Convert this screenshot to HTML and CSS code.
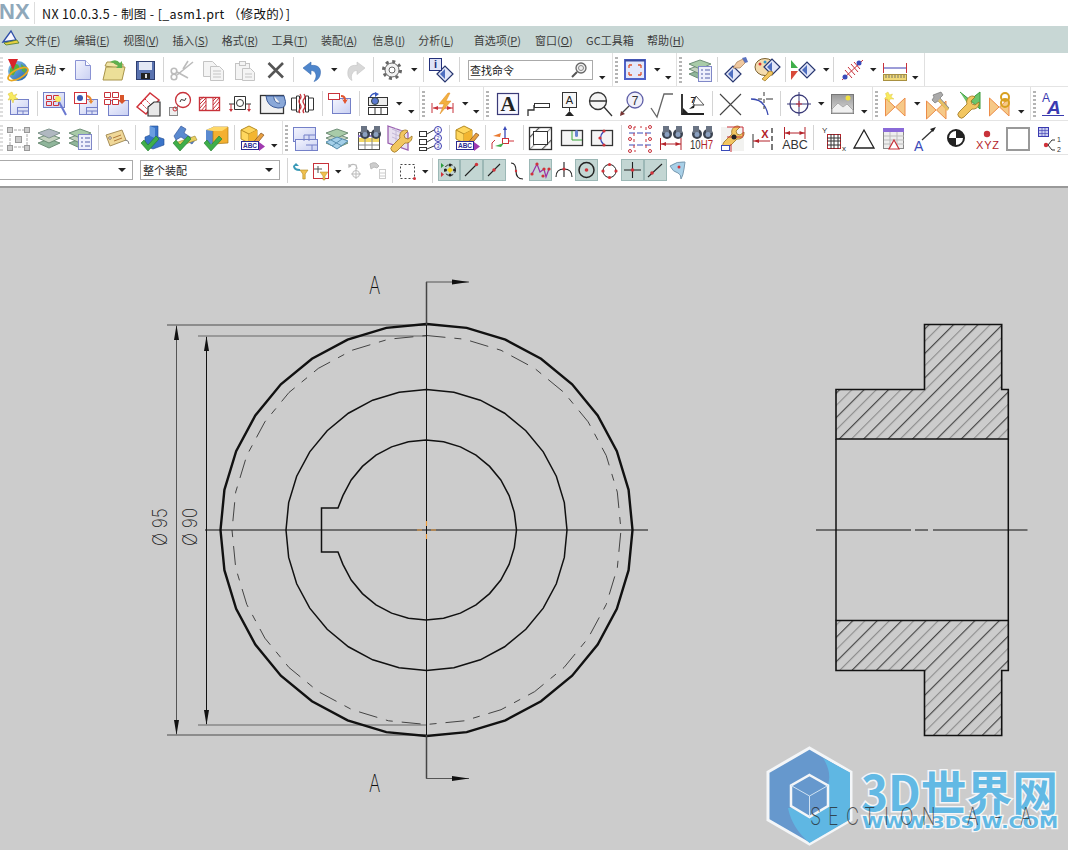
FILE: index.html
```html
<!DOCTYPE html>
<html lang="zh">
<head>
<meta charset="utf-8">
<title>NX 10.0.3.5</title>
<link rel="stylesheet" href="styles.css">
</head>
<body>
<svg class="defs" width="0" height="0">
<defs>
<linearGradient id="gw" x1="0" y1="0" x2="1" y2="1"><stop offset="0" stop-color="#f4f5fe"/><stop offset="1" stop-color="#c9d0f2"/></linearGradient>
<linearGradient id="gb" x1="0" y1="0" x2="1" y2="1"><stop offset="0" stop-color="#8cc8f0"/><stop offset="1" stop-color="#1d5ea8"/></linearGradient>
<linearGradient id="gs" x1="0" y1="0" x2="0" y2="1"><stop offset="0" stop-color="#9a9a9a"/><stop offset="1" stop-color="#dcdcdc"/></linearGradient>
<pattern id="hatch" width="17.26" height="17.26" patternUnits="userSpaceOnUse" patternTransform="rotate(45)"><path d="M6.4 0V17.260" stroke="#111" stroke-width=".85"/><path d="M15.030 0V17.260" stroke="#777" stroke-width=".85"/></pattern>
<path id="c" d="M0 0h6.5l-3.25 3.6z" fill="#222"/>
<g id="dia"><path d="M0 8 8 0l8 8-8 8z" fill="#e3e7f8" stroke="#26356f" stroke-width="1.2"/><path d="M3 8 8 3v10z" fill="#4f6fc0"/></g>
<g id="win"><rect x=".5" y=".5" width="18" height="15" fill="url(#gw)" stroke="#7480c8"/><rect x="7.5" y="8.5" width="11" height="7" fill="#dde1f6" stroke="#7480c8"/><path d="M7.5 12h11M13 12v3.500" stroke="#7480c8"/></g>
<g id="lay"><path d="M11 12 22 16 11 21 0 16z" fill="#8fb59a" stroke="#6f8f78"/><path d="M11 7 22 11 11 16 0 11z" fill="#c5d2c0" stroke="#6f8f78"/><path d="M11 2 22 6 11 11 0 6z" fill="#a8cba8" stroke="#6f8f78"/></g>
<g id="list"><rect x=".5" y=".5" width="13" height="15" fill="#eef0fc" stroke="#8088c8"/><path d="M3 4h2M7 4h5M3 8h2M7 8h5M3 12h2M7 12h5" stroke="#5560a8"/></g>
<g id="bow"><path d="M.5 2 10 11 .5 20zM20 2 10.500 11 20 20z" fill="#f6c988" stroke="#ec8c48"/></g>
<g id="chk"><path d="M0 7 3 4 7 9 15 0 18 3 7 15z" fill="#3fae4a" stroke="#1f7a2a" stroke-width=".6"/></g>
<g id="cube"><path d="M8 0 16 4v9l-8 4-8-4V4z" fill="#ffd75e" stroke="#b58a20"/><path d="M0 4 8 8 16 4M8 8v9" stroke="#b58a20" fill="none"/><path d="M8 8 16 4v9l-8 4z" fill="#f3b530"/></g>
<g id="wr"><path d="M15 0a6 6 0 0 0-6 8L1 16a3 3 0 0 0 5 5l8-8a6 6 0 0 0 7-7l-4 3-3-1-1-3 4-4z" fill="#f2c661" stroke="#9a7420" stroke-width=".8"/></g>
<g id="bin"><circle cx="5" cy="9" r="5" fill="#3b4350"/><circle cx="16" cy="9" r="5" fill="#3b4350"/><rect x="1" y="1" width="6" height="7" fill="#6a7484"/><rect x="14" y="1" width="6" height="7" fill="#6a7484"/><circle cx="5" cy="9.500" r="2.500" fill="#8aa0c0"/><circle cx="16" cy="9.500" r="2.500" fill="#8aa0c0"/></g>
<g id="dim"><path d="M0 6h21M.5 0v12M21 0v12" stroke="#b4232a" fill="none"/><path d="M1 6l5-2v4zM20.500 6l-5-2v4z" fill="#b4232a"/></g>
</defs>
</svg>

<header class="titlebar">
  <span class="nx">NX</span>
  <span class="title">NX 10.0.3.5 - 制图 - [_asm1.prt （修改的）]</span>
</header>

<nav class="menubar">
  <svg class="menu-ic" width="25" height="27" viewBox="0 0 25 27"><path d="M3 16 11 5l5 9z" fill="#f8f8ff" stroke="#2f4fa8" stroke-width="1.300"/><path d="M4 17 17 14l2 3-13 2z" fill="#e8d040" stroke="#4a7a30" stroke-width=".8"/></svg>
  <span class="mi">文件(<u>F</u>)</span><span class="mi">编辑(<u>E</u>)</span><span class="mi">视图(<u>V</u>)</span><span class="mi">插入(<u>S</u>)</span><span class="mi">格式(<u>R</u>)</span><span class="mi">工具(<u>T</u>)</span><span class="mi">装配(<u>A</u>)</span><span class="mi mi-i">信息(<u>I</u>)</span><span class="mi mi-f">分析(<u>L</u>)</span><span class="mi mi-p">首选项(<u>P</u>)</span><span class="mi">窗口(<u>O</u>)</span><span class="mi">GC工具箱</span><span class="mi">帮助(<u>H</u>)</span>
</nav>

<div class="tb">
  <i class="grip"></i>
  <svg width="31" height="33" viewBox="3 0 31 33"><circle cx="18" cy="18" r="10" fill="url(#gb)"/><path d="M12 13c3-3 6-2 7 0s-1 3-3 5-1 5-4 4-3-6 0-9zM21 11l5 4-1 5-3-2z" fill="#55b040"/><ellipse cx="18" cy="21" rx="11" ry="4.500" transform="rotate(-28 18 21)" fill="none" stroke="#e8a820" stroke-width="1.800"/><path d="M8 6h10l-5 11z" fill="#d8232a"/></svg>
  <span class="lbl">启动</span>
  <svg width="12" height="33" viewBox="56 0 12 33"><use href="#c" x="59" y="15"/></svg>
  <svg width="30" height="33" viewBox="68 0 30 33"><path d="M75.500 7.500h10l5 5v14h-15z" fill="url(#gw)" stroke="#8a93d4"/><path d="M85.500 7.500v5h5" fill="#fff" stroke="#8a93d4"/></svg>
  <svg width="32" height="33" viewBox="98 0 32 33"><path d="M105 13l2-4h6l2 2h8v5z" fill="#f2e6a8" stroke="#a8944a"/><path d="M103 27l3-13h19l-3 13z" fill="#ecdf98" stroke="#a8944a"/><path d="M110 9q6-4 10 1l2-2v7h-6l2-2q-3-3-8-4z" fill="#5fb04f"/></svg>
  <svg width="33" height="33" viewBox="130 0 33 33"><rect x="136.500" y="8.500" width="18" height="18" fill="#5a73b0" stroke="#2f3f70"/><rect x="139" y="9" width="13" height="8" fill="#e3e8f5"/><rect x="141" y="20" width="9" height="6" fill="#222"/><rect x="145" y="21" width="2" height="4" fill="#ddd"/></svg>
  <i class="sep"></i>
  <svg width="34" height="33" viewBox="164 0 34 33"><g fill="none" stroke="#bcbcbc" stroke-width="1.600"><circle cx="174" cy="24" r="2.800"/><circle cx="174" cy="18" r="2.800"/><path d="M177 22 193 9M177 19 188 25M183 16l5-8"/></g></svg>
  <svg width="32" height="33" viewBox="198 0 32 33"><g fill="#f4f4f4" stroke="#c4c4c4"><path d="M203.500 8.500h9l4 4v11h-13z"/><path d="M210.500 13.500h9l4 4v10h-13z"/><path d="M213 18h8M213 21h8M213 24h8" fill="none"/></g></svg>
  <svg width="32" height="33" viewBox="230 0 32 33"><g fill="#f4f4f4" stroke="#c4c4c4"><rect x="235.500" y="10.500" width="14" height="16"/><rect x="239.500" y="8.500" width="6" height="4"/><path d="M242.500 15.500h8l4 4v8h-12z"/><path d="M245 21h7M245 24h7" fill="none"/></g></svg>
  <svg width="31" height="33" viewBox="262 0 31 33"><path d="M268.500 10 283 24.500M283 10 268.500 24.500" stroke="#555" stroke-width="2.600"/></svg>
  <i class="sep"></i>
  <svg width="33" height="33" viewBox="294 0 33 33"><path d="M303 15l8-6v3.500c7-1 11 3 9 10-1 3-3 5-6 6 2-3 3-6 1-9-1-2-3-2-4-2v4z" fill="#4e86cc" stroke="#3a6cb0" stroke-width=".6"/></svg>
  <svg width="13" height="33" viewBox="327 0 13 33"><use href="#c" x="331" y="15"/></svg>
  <svg width="33" height="33" viewBox="340 0 33 33"><path d="M365 15l-8-6v3.500c-7-1-10 3-9 10 1 3 2 4 4 5-1-3-1-6 1-8 1-2 3-2 4-2v4z" fill="#d8d8d8" stroke="#c4c4c4" stroke-width=".6"/></svg>
  <i class="sep"></i>
  <svg width="34" height="33" viewBox="374 0 34 33"><circle cx="392" cy="17" r="8.500" fill="none" stroke="#666" stroke-width="3" stroke-dasharray="3 3.670"/><circle cx="392" cy="17" r="7" fill="#f2f2f2" stroke="#666"/><circle cx="392" cy="17" r="3" fill="#fff" stroke="#666"/></svg>
  <svg width="15" height="33" viewBox="408 0 15 33"><use href="#c" x="411" y="15"/></svg>
  <i class="sep"></i>
  <svg width="35" height="33" viewBox="424 0 35 33"><use href="#dia" x="437" y="13"/><rect x="429.500" y="5.500" width="12" height="12" fill="#dfe3f7" stroke="#23307a"/><text x="435.500" y="15" class="t-b t-c" font-size="11" fill="#23307a">i</text></svg>
  <i class="sep"></i>
  <div class="search"><span>查找命令</span><svg width="18" height="18" viewBox="0 0 18 18"><circle cx="11" cy="7" r="5" fill="#eee" stroke="#666" stroke-width="1.300"/><circle cx="11" cy="7" r="2.500" fill="none" stroke="#888"/><path d="M7 11 2 16" stroke="#555" stroke-width="2"/></svg></div>
  <svg width="19" height="33" viewBox="592 0 19 33"><use href="#c" x="598" y="23"/></svg>
  <i class="bar"></i><i class="grip g2"></i>
  <svg width="32" height="33" viewBox="619 0 32 33"><rect x="624" y="7" width="20" height="19" fill="#e4e9fb" stroke="#4f62c8" stroke-width="2"/><path d="M624 7.500h20" stroke="#3a4aa0" stroke-width="2"/><path d="M628 12h3M628 12v3M640 12h-3M640 12v3M628 22h3M628 22v-3M640 22h-3M640 22v-3" stroke="#e2552f" stroke-width="1.300"/></svg>
  <svg width="12" height="33" viewBox="651 0 12 33"><use href="#c" x="653" y="15"/></svg>
  <svg width="12" height="33" viewBox="663 0 12 33"><use href="#c" x="664" y="23"/></svg>
  <i class="bar"></i><i class="grip g2"></i>
  <svg width="33" height="33" viewBox="683 0 33 33"><use href="#lay" x="688" y="5"/><use href="#list" x="697" y="13"/></svg>
  <i class="sep"></i>
  <svg width="34" height="33" viewBox="718 0 34 33"><use href="#dia" x="725" y="13"/><path d="M733 15l4-6 6-3 2 4-5 5z" fill="#f0c9a0" stroke="#a07850" stroke-width=".7"/><path d="M742 5l4-1 2 5-3 1z" fill="#5a72c0"/></svg>
  <svg width="33" height="33" viewBox="752 0 33 33"><ellipse cx="765" cy="14" rx="10" ry="8.500" fill="#f4dcae" stroke="#7a6030"/><circle cx="760" cy="11" r="1.500" fill="#d33"/><circle cx="765" cy="9" r="1.500" fill="#39c"/><circle cx="770" cy="10" r="1.500" fill="#6b4"/><use href="#dia" x="764" y="6"/><path d="M770 18a4 4 0 0 0-3 3l-5 5 3 2 5-5a4 4 0 0 0 3-4z" fill="#f2c661" stroke="#9a7420" stroke-width=".7"/></svg>
  <i class="sep"></i>
  <svg width="34" height="33" viewBox="786 0 34 33"><path d="M791 7l7 8h-7z" fill="#3fae4a"/><path d="M791 27l7-9h-7z" fill="#d84a3a"/><use href="#dia" x="799" y="9"/></svg>
  <svg width="13" height="33" viewBox="820 0 13 33"><use href="#c" x="823" y="15"/></svg>
  <i class="sep"></i>
  <svg width="34" height="33" viewBox="835 0 34 33"><path d="M843 27 864 7M846 17l7 8M849 14l7 8M852 11l7 8M855 9l6 7" stroke="#c8323a" fill="none"/><circle cx="846" cy="24" r="2.500" fill="#3a4ab8"/><circle cx="860" cy="10" r="2.500" fill="#3a4ab8"/></svg>
  <svg width="11" height="33" viewBox="869 0 11 33"><use href="#c" x="871" y="15"/></svg>
  <svg width="32" height="33" viewBox="880 0 32 33"><path d="M885 15h22" stroke="#3a3ab0"/><path d="M884.500 10v10M907.500 10v10" stroke="#c8323a"/><rect x="884.500" y="21.500" width="23" height="6" fill="#f0d878" stroke="#a89040"/><path d="M887 22v3M890 22v3M893 22v3M896 22v3M899 22v3M902 22v3M905 22v3" stroke="#776"/></svg>
  <svg width="13" height="33" viewBox="912 0 13 33"><use href="#c" x="913" y="23"/></svg>
  <i class="bar"></i>
</div>

<div class="tb">
  <i class="grip"></i>
  <svg width="34" height="33" viewBox="3 0 34 33"><use href="#win" x="10" y="12"/><path d="M12 5l1.500 3.500L17 7l-2 3 3 2-4 .5-1 3.500-1.500-3.500L8 13l2-3-2-3z" fill="#f8ea60" stroke="#d8c030" stroke-width=".5"/></svg>
  <i class="sep"></i>
  <svg width="33" height="33" viewBox="38 0 33 33"><rect x="43.500" y="5.500" width="21" height="15" fill="url(#gw)" stroke="#7480c8"/><path d="M46.500 8.500h5v4h-5zM53.500 8.500h5v4h-5zM46.500 14.500h5v4h-5zM53.500 14.500h5v4h-5z" fill="none" stroke="#d0323a"/><path d="M58 13l8 15" stroke="#6a78d0" stroke-width="2"/><circle cx="58" cy="12" r="3" fill="#f8ea60"/></svg>
  <svg width="31" height="33" viewBox="71 0 31 33"><use href="#win" x="79" y="12"/><rect x="74.500" y="5.500" width="12" height="11" fill="#fff" stroke="#d0323a"/><circle cx="80" cy="11" r="3" fill="#3a5ab0"/><path d="M87 8q5 1 5 6l2-1-3 4-3-4 2 1q0-3-3-4z" fill="#ea8a30"/></svg>
  <svg width="32" height="33" viewBox="102 0 32 33"><rect x="108.500" y="13.500" width="20" height="15" fill="url(#gw)" stroke="#7480c8"/><path d="M104.500 5.500h6v5h-6zM112.500 5.500h6v5h-6zM104.500 12.500h6v5h-6zM112.500 12.500h6v5h-6z" fill="#fff" stroke="#c8323a"/><path d="M120 8h4v5h2l-4 4-4-4h2z" fill="#d8552a"/></svg>
  <svg width="31" height="33" viewBox="134 0 31 33"><path d="M137 20 150 6l9 7-13 14z" fill="#fff" stroke="#d0323a" stroke-width="1.500"/><path d="M141 16l6 6M145 12l6 6" stroke="#d0323a" stroke-dasharray="2 1"/><path d="M148 29V20l6-5h6v14z" fill="#e8e8e8" stroke="#333" stroke-width="1.200"/></svg>
  <svg width="30" height="33" viewBox="165 0 30 33"><rect x="169.500" y="20.500" width="8" height="8" fill="#eee" stroke="#888"/><path d="M175 22 181 16" stroke="#888"/><circle cx="175" cy="22" r="2" fill="none" stroke="#c8323a"/><circle cx="183" cy="13" r="7.500" fill="#fff" stroke="#c8323a" stroke-width="1.300"/><path d="M180 15q1-4 3-2t3-2" fill="none" stroke="#333"/></svg>
  <svg width="30" height="33" viewBox="195 0 30 33"><rect x="199.500" y="10.500" width="20" height="13" fill="#fff" stroke="#c8323a" stroke-width="1.400"/><path d="M200 13l4-3M200 17l6-6M200 21l6-7M201 24l5-6M204 24l2-2M213 14l3-3M213 18l6-7M213 22l6-7M215 24l4-4" stroke="#c8323a"/><path d="M206 10v14M213 10v14" stroke="#c8323a"/></svg>
  <svg width="31" height="33" viewBox="225 0 31 33"><path d="M229 17h22" stroke="#333"/><path d="M231 17v5M249 17v5" stroke="#c8323a"/><path d="M229 22h4l-2 3zM247 22h4l-2 3z" fill="#c8323a"/><path d="M234.500 9.500h11v13h-11z" fill="#fff" stroke="#333"/><circle cx="240" cy="16" r="3.500" fill="none" stroke="#333"/></svg>
  <svg width="32" height="33" viewBox="256 0 32 33"><rect x="260.500" y="8.500" width="23" height="18" fill="#f2f2f2" stroke="#333" stroke-width="1.300"/><path d="M266 9q1 11 12 12t6-12z" fill="#8aa8d8" stroke="#3a5a98"/><path d="M274 9a5 6 0 0 0 6 7" fill="#f2f2f2" stroke="#3a5a98"/></svg>
  <svg width="34" height="33" viewBox="288 0 34 33"><path d="M291.500 11h5v12h-5zM308.500 11h5v12h-5zM296.500 9h3v16h-3zM305.500 9h3v16h-3z" fill="#fff" stroke="#333"/><path d="M300 7q2 3 0 5t0 5 0 5 0 4M304 7q2 3 0 5t0 5 0 5 0 4" fill="none" stroke="#c8323a" stroke-width="1.300"/></svg>
  <i class="sep"></i>
  <svg width="36" height="33" viewBox="323 0 36 33"><rect x="332.500" y="11.500" width="18" height="15" fill="url(#gw)" stroke="#7480c8"/><rect x="328.500" y="6.500" width="11" height="6" fill="#fff" stroke="#c8323a"/><path d="M341 8q5 0 5 5l2-1-3 5-3-5 2 1q0-3-3-3z" fill="#e2552f"/></svg>
  <i class="sep"></i>
  <svg width="34" height="33" viewBox="360 0 34 33"><path d="M370 12a5 5 0 0 1 7-5" fill="none" stroke="#3a5ac0" stroke-width="1.500"/><path d="M379 7l-4 3V5z" fill="#3a5ac0"/><rect x="368.500" y="10.500" width="19" height="8" fill="#eee" stroke="#333"/><circle cx="375" cy="14" r="3.500" fill="#5a78d0" stroke="#344"/><rect x="368.500" y="20.500" width="19" height="7" fill="#fff" stroke="#333"/><path d="M375 21v6M381 21v6" stroke="#333"/></svg>
  <svg width="12" height="33" viewBox="394 0 12 33"><use href="#c" x="396" y="15"/></svg>
  <svg width="13" height="33" viewBox="406 0 13 33"><use href="#c" x="408" y="23"/></svg>
  <i class="bar"></i><i class="grip g2"></i>
  <svg width="34" height="33" viewBox="427 0 34 33"><path d="M432 16v10M453 16v10M433 21h20" stroke="#c8323a"/><path d="M433 21l5-2v4zM452 21l-5-2v4z" fill="#c8323a"/><path d="M448 6l-9 11h5l-4 10 11-13h-5l4-8z" fill="#f2b040" stroke="#e08a20" stroke-width=".5"/></svg>
  <svg width="11" height="33" viewBox="461 0 11 33"><use href="#c" x="462" y="15"/></svg>
  <svg width="11" height="33" viewBox="472 0 11 33"><use href="#c" x="473" y="23"/></svg>
  <i class="bar"></i><i class="grip g2"></i>
  <svg width="32" height="33" viewBox="491 0 32 33"><rect x="497.500" y="6.500" width="21" height="21" fill="#f8f8ff" stroke="#3a3a78" stroke-width="1.200"/><text x="508" y="24" class="t-s t-c" font-size="21" fill="#222">A</text></svg>
  <svg width="37" height="33" viewBox="523 0 37 33"><path d="M528 29v-6h6v-5" fill="none" stroke="#333" stroke-width="1.300"/><rect x="534.500" y="16.500" width="15" height="4" fill="#fff" stroke="#333"/></svg>
  <svg width="26" height="33" viewBox="560 0 26 33"><rect x="562.500" y="5.500" width="14" height="15" fill="#f6f6f6" stroke="#333"/><text x="569.500" y="17" class="t-a t-c" font-size="11" fill="#222">A</text><path d="M569.500 20v4" stroke="#333"/><path d="M565 29l4.500-5 4.500 5z" fill="#222"/></svg>
  <svg width="31" height="33" viewBox="586 0 31 33"><circle cx="598" cy="14" r="8.500" fill="#f4f4f4" stroke="#333" stroke-width="1.300"/><path d="M590 14h16M604 20l8 9" stroke="#333" stroke-width="1.300"/></svg>
  <svg width="30" height="33" viewBox="617 0 30 33"><circle cx="635" cy="13" r="8" fill="#f0f0fa" stroke="#6060a8" stroke-width="1.300"/><text x="635" y="17.500" class="t-a t-c" font-size="12" fill="#333">7</text><path d="M629 19 621 27" stroke="#444" stroke-width="1.300"/><path d="M620 29l1-5 4 3z" fill="#733"/></svg>
  <svg width="29" height="33" viewBox="647 0 29 33"><path d="M651 21l6 9 7-23h9" fill="none" stroke="#666" stroke-width="1.300"/></svg>
  <svg width="36" height="33" viewBox="676 0 36 33"><path d="M682 7v20h22" stroke="#222" stroke-width="1.800" fill="none"/><path d="M683 26v-5l5 5z" fill="#222"/><path d="M689 22l6-5-1 4z" fill="#222"/><path d="M696 9l8 9h-11z" fill="none" stroke="#555"/><text x="693" y="16" class="t-b t-c" font-size="9" fill="#222">7</text></svg>
  <i class="sep"></i>
  <svg width="33" height="33" viewBox="713 0 33 33"><path d="M720 7l21 21M741 7l-21 21" stroke="#444" stroke-width="1.100"/></svg>
  <svg width="34" height="33" viewBox="746 0 34 33"><path d="M751 12q14 0 17 16" fill="none" stroke="#3a4ab0" stroke-width="1.300"/><path d="M764 5v4M764 12v4M764 19v3M758 12h4M766 12h7" stroke="#333"/></svg>
  <i class="sep"></i>
  <svg width="36" height="33" viewBox="780 0 36 33"><circle cx="798" cy="17" r="9" fill="none" stroke="#3a3a78" stroke-width="1.300"/><path d="M798 5v24M786 17h24" stroke="#3a3a78"/><path d="M795 17h6M798 14v6" stroke="#c8323a"/></svg>
  <svg width="10" height="33" viewBox="816 0 10 33"><use href="#c" x="817" y="15"/></svg>
  <svg width="32" height="33" viewBox="826 0 32 33"><rect x="830.500" y="7.500" width="22" height="19" fill="url(#gs)" stroke="#777"/><path d="M831 22l6-6 5 4 4-3 6 6v3h-21z" fill="#f0f0f0" stroke="#aaa"/><circle cx="847" cy="11" r="2.500" fill="#f0e040"/></svg>
  <svg width="13" height="33" viewBox="858 0 13 33"><use href="#c" x="860" y="23"/></svg>
  <i class="bar"></i><i class="grip g2"></i>
  <svg width="32" height="33" viewBox="879 0 32 33"><use href="#bow" x="884" y="9"/><path d="M887 5l1.500 3 3-1-1.500 3 3 2-4 0-1 3-1.500-3-3 0 2-2.500-1-3z" fill="#f8ea60" stroke="#d8c030" stroke-width=".4"/></svg>
  <svg width="10" height="33" viewBox="911 0 10 33"><use href="#c" x="913" y="15"/></svg>
  <svg width="31" height="33" viewBox="921 0 31 33"><use href="#bow" x="925" y="12"/><path d="M932 8l8-3 2 3-3 3 9 10-2 2-9-9-3 2-3-3 2-3z" fill="#aaa" stroke="#666" stroke-width=".6"/><path d="M939 12l9 10-2 2-9-10z" fill="#e8c060"/></svg>
  <svg width="30" height="33" viewBox="952 0 30 33"><path d="M959 5l10 8 10-8v17l-10-9-3 3" fill="#6cc56c" stroke="#3a9a3a"/><use href="#wr" x="957" y="9"/></svg>
  <svg width="32" height="33" viewBox="982 0 32 33"><use href="#bow" x="988" y="9"/><g fill="none" stroke="#d8a020" stroke-width="2"><circle cx="1004" cy="10" r="4"/><circle cx="1004" cy="16" r="4"/></g></svg>
  <svg width="15" height="33" viewBox="1014 0 15 33"><use href="#c" x="1017" y="23"/></svg>
  <i class="bar"></i><i class="grip g2"></i>
  <svg width="31" height="33" viewBox="1037 0 31 33"><text x="1041" y="15" class="t-a" font-size="12" fill="#3a3ab0">A</text><text x="1046" y="27" class="t-bi" font-size="19" fill="#3a3ab0">A</text><path d="M1041 28.500h22" stroke="#3a3ab0"/></svg>
</div>

<div class="tb">
  <i class="grip"></i>
  <svg width="31" height="33" viewBox="3 0 31 33"><path d="M10 9h17M10 26h17M10 9v17M27 9v17" stroke="#aaa" stroke-dasharray="3 1"/><g fill="#ccc" stroke="#999"><rect x="7.500" y="6.500" width="5" height="5"/><rect x="24.500" y="6.500" width="5" height="5"/><rect x="7.500" y="24.500" width="5" height="5"/><rect x="24.500" y="24.500" width="5" height="5"/><rect x="15.500" y="15.500" width="6" height="6"/></g></svg>
  <svg width="31" height="33" viewBox="34 0 31 33"><use href="#lay" x="38" y="6"/><path d="M49 8 60 12 49 17 38 12z" fill="#b7a6d8" fill-opacity=".5"/></svg>
  <svg width="33" height="33" viewBox="65 0 33 33"><use href="#lay" x="69" y="6"/><use href="#list" x="78" y="13"/></svg>
  <i class="sep"></i>
  <svg width="36" height="33" viewBox="99 0 36 33"><path d="M106 14 122 9l4 10-16 6z" fill="#f0d898" stroke="#a8905a"/><circle cx="110" cy="17" r="1.300" fill="#fff" stroke="#876"/><path d="M113 17l8-3M114 20l8-3" stroke="#b07838"/><path d="M125 19q4 0 4 4" fill="none" stroke="#888"/></svg>
  <i class="sep"></i>
  <svg width="34" height="33" viewBox="136 0 34 33"><path d="M150 5h8v11l6 2v6l-11 4-8-3V16l5-2z" fill="#3a74c8" stroke="#204a90" stroke-width=".6"/><path d="M150 5l5 2v10l-5-2z" fill="#6a9ee0"/><use href="#chk" x="141" y="15"/></svg>
  <svg width="30" height="33" viewBox="170 0 30 33"><path d="M181 5l5 3-2 4 11 7-3 4-11-7-5 3-2-4z" fill="#5a8ad0" stroke="#2a4a90" stroke-width=".6"/><path d="M175 22l20-7 2 4-20 7z" fill="#e8d060" stroke="#8a7020" stroke-width=".5"/><use href="#chk" x="173" y="15"/></svg>
  <svg width="34" height="33" viewBox="200 0 34 33"><path d="M206 9l7-3v17h-7z" fill="#5a8ad0"/><path d="M213 6h15v16l-15 1z" fill="#f4b030" stroke="#a87818" stroke-width=".7"/><path d="M206 9l7-3h15l-6 4h-9z" fill="#ffd868"/><use href="#chk" x="204" y="15"/></svg>
  <i class="sep"></i>
  <svg width="33" height="33" viewBox="235 0 33 33"><use href="#cube" x="241" y="5"/><path d="M252 23l9-11 3 2-9 11-4 1z" fill="#e8a040" stroke="#704010" stroke-width=".6"/><rect x="241.500" y="20.500" width="17" height="8" fill="#fff" stroke="#2a2a90"/><text x="250" y="27" class="t-b t-c" font-size="6.500" fill="#2a2a90">ABC</text><path d="M259 21l6 4.500-6 4.500z" fill="#a03ab0"/></svg>
  <svg width="14" height="33" viewBox="268 0 14 33"><use href="#c" x="271" y="23"/></svg>
  <i class="bar"></i><i class="grip g2"></i>
  <svg width="32" height="33" viewBox="290 0 32 33"><rect x="293.500" y="6.500" width="22" height="14" fill="url(#gw)" stroke="#7480c8"/><rect x="295.500" y="18.500" width="22" height="11" fill="url(#gw)" stroke="#7480c8"/><path d="M304 14h11M304 14v6M309 14v6M306 24h11M312 24v5" stroke="#7480c8"/></svg>
  <svg width="31" height="33" viewBox="322 0 31 33"><use href="#lay" x="326" y="6"/><path d="M337 16 348 20 337 28 326 21z" fill="#a4cfe8" stroke="#5a90b0"/><path d="M331 19l11 6M342 18l-10 7" stroke="#5a90b0"/></svg>
  <svg width="31" height="33" viewBox="353 0 31 33"><rect x="358.500" y="11.500" width="21" height="17" fill="#fff" stroke="#555"/><path d="M358 15h22" stroke="#7a5ac0" stroke-width="1.500"/><rect x="359" y="17" width="20" height="4" fill="#f2d868"/><path d="M359 24h20M365 15v13M372 15v13" stroke="#888"/><use href="#bin" x="360" y="4"/></svg>
  <svg width="30" height="33" viewBox="384 0 30 33"><path d="M388 5l20 7v17l-20-7z" fill="#e8e0f0" stroke="#9a60b0" stroke-width="1.300"/><path d="M392 8l12 5M392 12l12 5M392 16l12 5M396 7v16M401 9v16" stroke="#c4b8d8"/><use href="#wr" x="391" y="9"/></svg>
  <svg width="35" height="33" viewBox="414 0 35 33"><g fill="#fff" stroke="#333"><rect x="419.500" y="10.500" width="7" height="5"/><rect x="419.500" y="18.500" width="7" height="5"/><rect x="419.500" y="26.500" width="7" height="3"/></g><g fill="#fff" stroke="#3a3ab0"><circle cx="438" cy="9" r="3.500"/><circle cx="438" cy="17" r="3.500"/><circle cx="438" cy="25" r="3.500"/></g><path d="M427 13l7-4M427 21l7-4M427 28l7-3" stroke="#333"/><g class="t-a t-c" font-size="6" fill="#3a3ab0"><text x="438" y="11">1</text><text x="438" y="19">2</text><text x="438" y="27">3</text></g></svg>
  <i class="sep"></i>
  <svg width="35" height="33" viewBox="450 0 35 33"><use href="#cube" x="456" y="5"/><path d="M467 23l9-11 3 2-9 11-4 1z" fill="#e8a040" stroke="#704010" stroke-width=".6"/><rect x="456.500" y="20.500" width="17" height="8" fill="#fff" stroke="#2a2a90"/><text x="465" y="27" class="t-b t-c" font-size="6.500" fill="#2a2a90">ABC</text><path d="M474 21l6 4.500-6 4.500z" fill="#a03ab0"/></svg>
  <i class="sep"></i>
  <svg width="37" height="33" viewBox="486 0 37 33"><path d="M505 7v14" stroke="#3a4ab8" stroke-width="1.300"/><path d="M505 5l-2 4h4z" fill="#3a4ab8"/><rect x="502.500" y="17.500" width="6" height="5" fill="#fff" stroke="#d0323a"/><path d="M508 20h6" stroke="#d0323a"/><path d="M493 15l8-3-1 4z" fill="#ea7a30"/><path d="M492 28v-6l3-3" stroke="#c8323a" fill="none"/><path d="M495 25l9-3-3 4z" fill="#3fae4a"/></svg>
  <i class="sep"></i>
  <svg width="36" height="33" viewBox="524 0 36 33"><rect x="529.500" y="6.500" width="22" height="22" fill="url(#hatch)" stroke="#333" stroke-width="1.300"/><rect x="533.500" y="10.500" width="14" height="13" fill="#fff" stroke="#333"/></svg>
  <svg width="30" height="33" viewBox="560 0 30 33"><rect x="561.500" y="9.500" width="21" height="15" fill="#f4f4f4" stroke="#333" stroke-width="1.300"/><path d="M572 10v9h10" fill="none" stroke="#3aa83a"/><rect x="575" y="9" width="3" height="7" rx="1.500" fill="#6a86d0"/></svg>
  <svg width="31" height="33" viewBox="590 0 31 33"><rect x="591.500" y="9.500" width="21" height="15" fill="#f4f4f4" stroke="#333" stroke-width="1.300"/><path d="M604 10q-7 7 0 14" fill="none" stroke="#3a4ab8" stroke-width="1.300"/><circle cx="604" cy="10" r="1.600" fill="#d0323a"/><circle cx="600" cy="17" r="1.600" fill="#d0323a"/><circle cx="604" cy="24" r="1.600" fill="#d0323a"/></svg>
  <i class="sep"></i>
  <svg width="33" height="33" viewBox="622 0 33 33"><g fill="none" stroke="#c8323a"><path d="M629 12h22M629 24h22" stroke="#3a4ab8" stroke-dasharray="6 2"/><circle cx="630" cy="6" r="1.500"/><circle cx="650" cy="6" r="1.500"/><circle cx="630" cy="18" r="1.500"/><circle cx="650" cy="18" r="1.500"/><circle cx="630" cy="30" r="1.500"/><circle cx="650" cy="30" r="1.500"/><path d="M634 6h2M640 6h2M634 30h2"/></g><path d="M634 6v24M646 6v24" stroke="#c8323a" stroke-dasharray="3 3"/></svg>
  <svg width="30" height="33" viewBox="655 0 30 33"><use href="#bin" x="662" y="4"/><use href="#dim" x="660" y="17"/></svg>
  <svg width="35" height="33" viewBox="685 0 35 33"><use href="#bin" x="692" y="4"/><text x="690" y="28" class="t-a" font-size="12.500" textLength="23" lengthAdjust="spacingAndGlyphs" fill="#333">10<tspan fill="#b4232a">H7</tspan></text></svg>
  <svg width="26" height="33" viewBox="720 0 26 33"><rect x="721" y="6" width="23" height="24" fill="#f2f2f0"/><use href="#wr" x="723" y="5"/><path d="M727 6h16M743 6v9M727 16h16M731 23v8" stroke="#c8323a"/><circle cx="734" cy="16" r="2.500" fill="#222"/><rect x="721.500" y="24.500" width="8" height="5" fill="#fff" stroke="#3a4ab8"/></svg>
  <svg width="30" height="33" viewBox="746 0 30 33"><path d="M753 13v14" stroke="#333"/><path d="M753 20h17" stroke="#b4232a"/><path d="M754 20l5-2v4z" fill="#b4232a"/><text x="765" y="17" class="t-b t-c" font-size="11" fill="#b4232a">X</text><path d="M772 7v5M772 15v5M772 23v6" stroke="#333" stroke-width="1.300"/></svg>
  <svg width="37" height="33" viewBox="776 0 37 33"><use href="#dim" x="784" y="6"/><text x="795" y="28" class="t-a t-c" font-size="12.500" fill="#333">ABC</text></svg>
  <i class="sep"></i>
  <svg width="34" height="33" viewBox="814 0 34 33"><text x="822" y="12" class="t-a" font-size="8" fill="#333">Y</text><rect x="827.500" y="13.500" width="13" height="14" fill="#fff" stroke="#b4232a"/><path d="M827 17h14M827 20h14M827 24h14M831 13v15M834 13v15M838 13v15" stroke="#333"/><text x="842" y="30" class="t-a" font-size="8" fill="#333">x</text></svg>
  <svg width="28" height="33" viewBox="848 0 28 33"><path d="M864 9 854 27h20z" fill="none" stroke="#222" stroke-width="1.300"/></svg>
  <svg width="32" height="33" viewBox="876 0 32 33"><rect x="883.500" y="7.500" width="20" height="20" fill="#eee" stroke="#888"/><rect x="883" y="7" width="21" height="4" fill="#8a6ad8"/><path d="M884 15h20M884 19h20M884 23h20M890 11v16M897 11v16" stroke="#bbb"/><path d="M894 19l5 9h-10z" fill="#fff" stroke="#c8323a" stroke-width="1.200"/></svg>
  <svg width="32" height="33" viewBox="908 0 32 33"><text x="914" y="30" class="t-a" font-size="14" fill="#3a4ab8">A</text><path d="M922 19l12-11" stroke="#333" stroke-width="1.300"/><path d="M936 6l-6 2 3 3z" fill="#222"/></svg>
  <svg width="28" height="33" viewBox="940 0 28 33"><circle cx="956" cy="17" r="8" fill="#fff" stroke="#222" stroke-width="2"/><path d="M956 9a8 8 0 0 1 8 8h-8zM956 17h-8a8 8 0 0 0 8 8z" fill="#222"/></svg>
  <svg width="32" height="33" viewBox="968 0 32 33"><circle cx="987" cy="13" r="3.200" fill="#c8323a"/><text x="988" y="28" class="t-a t-c" font-size="11" letter-spacing=".8" fill="#b4232a">XYZ</text></svg>
  <svg width="31" height="33" viewBox="1000 0 31 33"><rect x="1007" y="7" width="22" height="22" fill="#fff" stroke="#999" stroke-width="2"/></svg>
  <svg width="37" height="33" viewBox="1031 0 37 33"><rect x="1038.500" y="6.500" width="10" height="9" fill="#c8ccf0" stroke="#3a3ab0"/><path d="M1039 9.500h10M1039 12.500h10M1042 7v8M1045 7v8" stroke="#3a3ab0" stroke-width=".6"/><circle cx="1046" cy="24" r="2.200" fill="#d0323a"/><path d="M1048 24l4-5h3M1048 24l4 5h3" fill="none" stroke="#333"/><text x="1057" y="21" class="t-a" font-size="7" fill="#333">1</text><text x="1057" y="31" class="t-a" font-size="7" fill="#333">2</text></svg>
</div>

<div class="tb tb4">
  <div class="sel s1"><span></span><i></i></div>
  <div class="sel s2"><span>整个装配</span><i></i></div>
  <i class="sep"></i>
  <svg width="23" height="31" viewBox="288 0 23 31"><path d="M294 11q0 4 6 4" fill="none" stroke="#3a9ab8" stroke-width="2"/><path d="M293 11l3-3 3 3z" fill="#3a9ab8"/><path d="M300 15h8l-2.800 4v5h-2.400v-5z" fill="#f0c050" stroke="#b08820" stroke-width=".6"/></svg>
  <svg width="22" height="31" viewBox="311 0 22 31"><rect x="313.500" y="8.500" width="15" height="15" fill="#fff" stroke="#c8323a"/><path d="M318 11v7M314 14h8" stroke="#555"/><path d="M320 17h8l-3 4v4h-2v-4z" fill="#f0c050" stroke="#b08820" stroke-width=".5"/></svg>
  <svg width="12" height="31" viewBox="333 0 12 31"><use href="#c" x="335" y="15"/></svg>
  <svg width="21" height="31" viewBox="345 0 21 31"><path d="M349 12q2-4 7-2l1 4M351 11l-2 1v-3" fill="none" stroke="#bbb" stroke-width="1.300"/><circle cx="356" cy="19" r="3.500" fill="none" stroke="#bbb"/><path d="M356 13v11M351 19h10" stroke="#bbb"/></svg>
  <svg width="26" height="31" viewBox="366 0 26 31"><path d="M370 9q3-2 6-1l3 3-2 2-3-1-3 2z" fill="#ccc" stroke="#bbb"/><rect x="379.500" y="14.500" width="6" height="9" fill="none" stroke="#ccc"/><path d="M380 18h5M380 21h5" stroke="#ccc"/></svg>
  <i class="sep"></i>
  <svg width="26" height="31" viewBox="393 0 26 31"><rect x="400.500" y="9.500" width="14" height="14" fill="none" stroke="#444" stroke-dasharray="2 2"/><circle cx="414.500" cy="23.500" r="1.500" fill="#d0323a"/></svg>
  <svg width="13" height="31" viewBox="419 0 13 31"><use href="#c" x="422" y="15"/></svg>
  <i class="sep"></i>
  <svg class="tog tg0" width="22" height="22" viewBox="0 0 22 22"><circle cx="12" cy="11" r="5.500" fill="none" stroke="#222" stroke-dasharray="3 2"/><path d="M9 11l3-3 3 3-3 3z" fill="#f0d020"/><circle cx="7.500" cy="11" r="1.500" fill="#222"/><circle cx="16.500" cy="11" r="1.500" fill="#222"/><circle cx="12" cy="6" r="1.500" fill="#222"/><circle cx="12" cy="16" r="1.500" fill="#222"/><path d="M3 4l3 2.500L3 9z" fill="#2a9a3a"/><path d="M3 13l3 2.500L3 18z" fill="#d0323a"/></svg>
  <svg class="tog" width="23" height="22" viewBox="0 0 23 22"><path d="M5 17 17 5" stroke="#222" stroke-width="1.100"/><circle cx="16.500" cy="5.500" r="1.700" fill="#d0323a"/></svg>
  <svg class="tog" width="23" height="22" viewBox="0 0 23 22"><path d="M5 17 17 5" stroke="#222" stroke-width="1.100"/><circle cx="11" cy="11" r="1.700" fill="#d0323a"/></svg>
  <svg width="23" height="31" viewBox="506 0 23 31"><path d="M511 8q5 0 5 8t7 8" fill="none" stroke="#222" stroke-width="1.200"/><circle cx="516" cy="16" r="1.200" fill="#d0323a"/></svg>
  <svg class="tog" width="23" height="22" viewBox="0 0 23 22"><path d="M3 15 8 5l3 8 4-3 2 8 3-8" fill="none" stroke="#9a30a8" stroke-width="1.200"/><g fill="#d0323a"><circle cx="3" cy="15" r="1.600"/><circle cx="8" cy="5" r="1.600"/><circle cx="15" cy="10" r="1.600"/><circle cx="14" cy="17" r="1.600"/><circle cx="20" cy="10" r="1.600"/></g></svg>
  <svg width="23" height="31" viewBox="552 0 23 31"><path d="M556 22q0-8 8-8t8 8M564 7v15" fill="none" stroke="#222" stroke-width="1.100"/><circle cx="564" cy="14" r="1.600" fill="#d0323a"/></svg>
  <svg class="tog" width="23" height="22" viewBox="0 0 23 22"><circle cx="11.500" cy="11" r="7.500" fill="none" stroke="#222" stroke-width="1.500"/><circle cx="11.500" cy="11" r="1.800" fill="#d0323a"/></svg>
  <svg width="23" height="31" viewBox="598 0 23 31"><circle cx="609.500" cy="16" r="6.500" fill="none" stroke="#222"/><g fill="#d0323a"><circle cx="609.500" cy="9.500" r="1.600"/><circle cx="609.500" cy="22.500" r="1.600"/><circle cx="603" cy="16" r="1.600"/><circle cx="616" cy="16" r="1.600"/></g></svg>
  <svg class="tog" width="23" height="22" viewBox="0 0 23 22"><path d="M11.500 3v16M3 11h17" stroke="#222" stroke-width="1.100"/><circle cx="11.500" cy="11" r="1.800" fill="#d0323a"/></svg>
  <svg class="tog" width="23" height="22" viewBox="0 0 23 22"><path d="M4 18 18 5" stroke="#222" stroke-width="1.100"/><circle cx="8" cy="14" r="1.800" fill="#d0323a"/></svg>
  <svg width="23" height="31" viewBox="667 0 23 31"><path d="M670 11q7-5 15-4l-1 7q-1 7-3 10 0-5-3-6-5-1-8-7z" fill="#a8d0e8" stroke="#7a9ab0"/><circle cx="679" cy="12" r="1.500" fill="#d0323a"/></svg>
</div>

<main class="canvas">
<svg class="sheet" width="1068" height="662" viewBox="0 188 1068 662">
  <defs>
    <polygon id="p32" vector-effect="non-scaling-stroke" points="0,-100 19.500,-98.100 38.300,-92.400 55.600,-83.100 70.700,-70.700 83.100,-55.600 92.400,-38.300 98.100,-19.500 100,0 98.100,19.500 92.400,38.300 83.100,55.600 70.700,70.700 55.600,83.100 38.300,92.400 19.500,98.100 0,100 -19.500,98.100 -38.300,92.400 -55.600,83.100 -70.700,70.700 -83.100,55.600 -92.400,38.300 -98.100,19.500 -100,0 -98.100,-19.500 -92.400,-38.300 -83.100,-55.600 -70.700,-70.700 -55.600,-83.100 -38.300,-92.400 -19.500,-98.100"/>
  </defs>
  <g fill="none">
    <path d="M167 325H426" stroke="#8c8c8c" stroke-width="2"/>
    <path d="M167 735H426" stroke="#8c8c8c" stroke-width="2"/>
    <path d="M198 336H426M198 725H426" stroke="#666"/>
    <path d="M176.500 326V734" stroke="#555"/>
    <path d="M206.500 337V724" stroke="#111"/>
    <use href="#p32" transform="translate(426.500 530) scale(2.06)" stroke="#111" stroke-width="2.400"/>
    <use href="#p32" transform="translate(426.500 530) scale(1.945)" stroke="#333" stroke-width=".9" stroke-dasharray="19 9 7 9"/>
    <use href="#p32" transform="translate(426.500 530) scale(1.405)" stroke="#111" stroke-width="1.500"/>
    <path d="M338 508 342.900 495.600 351.200 480 362.400 466.400 376 455.200 391.600 446.900 408.400 441.700 426 440 443.600 441.700 460.400 446.900 476 455.200 489.600 466.400 500.800 480 509.100 495.600 514.300 512.400 516.500 530 514.300 547.600 509.100 564.400 500.800 580 489.600 593.600 476 604.800 460.400 613.100 443.600 618.300 426 620 408.400 618.300 391.600 613.100 376 604.800 362.400 593.600 351.200 580 342.900 564.400 338 552H321.500V508Z" stroke="#111" stroke-width="1.500"/>
    <path d="M205 530H648" stroke="#111"/>
    <path d="M426.500 325V735" stroke="#111"/>
    <path d="M426.500 282V325M426.500 735V778.500" stroke="#444" stroke-width="1.500"/>
    <path d="M426 282H469M426 778.500H469" stroke="#555"/>
    <path d="M417 530H422M431 530H436M426.500 521V526M426.500 534V539" stroke="#f0a040" stroke-width="1.200"/>
    <path d="M836 439V389.500H924.500V324.500H1001.700V389.500H1008.300V439ZM836 620.500V670.500H924.500V735.500H1001.700V670.500H1008.300V620.500Z" fill="url(#hatch)" stroke="#111" stroke-width="1.600"/>
    <path d="M836 439V620.500M1008.300 439V620.500" stroke="#111" stroke-width="1.500"/>
    <path d="M816 530H911M915 530H928M933 530H1027.500" stroke="#111"/>
  </g>
  <path d="M176.500 325l-2.500 15h5zM176.500 735l-2.500-15h5zM206.500 336l-2.500 15h5zM206.500 725l-2.500-15h5zM469 282l-17-2.500v5zM469 778.500l-17-2.500v5z" fill="#111"/>
  <text class="dr" transform="translate(369 294) scale(.72 1)" font-size="24">A</text>
  <text class="dr" transform="translate(369 792) scale(.72 1)" font-size="24">A</text>
  <text class="dr dr-d" transform="translate(167 546) rotate(-90) scale(.86 1)" font-size="20">Ø 95</text>
  <text class="dr dr-d" transform="translate(197 546) rotate(-90) scale(.86 1)" font-size="20">Ø 90</text>
  <g class="wm">
    <path d="M809.500 748 851 772V820L809.500 844 768 820V772Z" fill="#6698cd" stroke="#f4f6f8" stroke-width="3"/>
    <path d="M823 758Q832 772 828 785V806L788 808Q792 828 809.500 843L850 819.500V772.500Z" fill="#5fb7e3"/>
    <path d="M809.500 775 828 785.500V806L809.500 817 791 806V785.500Z" fill="#6698cd" stroke="#f4f6f8" stroke-width="2.500"/>
    <path d="M791 785.500 809.500 796 828 785.500M809.500 796V817" fill="none" stroke="#cfe2f2" stroke-width="1"/>
    <text class="wm-big" x="861" y="811" font-size="48" textLength="197" lengthAdjust="spacingAndGlyphs">3D世界网</text>
    <text class="wm-url" x="862" y="828" font-size="15" textLength="196" lengthAdjust="spacingAndGlyphs">WWW.3DSJW.COM</text>
  </g>
  <text class="dr dr-s" transform="translate(810 825) scale(.75 1)" font-size="24" x="0 24 48 72 99 120 149 209 245 280">SECTIONA-A</text>
</svg>
</main>
</body>
</html>
```

FILE: styles.css
```css
* { box-sizing: border-box; }
html, body { margin: 0; height: 100%; }
body {
  width: 1068px;
  height: 850px;
  overflow: hidden;
  background: #fff;
  display: flex;
  flex-direction: column;
  font-family: "Noto Sans CJK SC", "Liberation Sans", sans-serif;
  color: #222;
}
svg { display: block; flex: none; }
.defs { height: 0; }
i { font-style: normal; display: block; flex: none; }

.titlebar { height: 26px; flex: none; display: flex; align-items: center; background: #fff; overflow: hidden; }
.nx {
  width: 36px; height: 22px; flex: none;
  margin-left: -1px; margin-right: 7px;
  border-right: 1px solid #ddd;
  font: bold 22px/20px "Liberation Sans", sans-serif;
  color: #8fa8ba;
}
.title { font-size: 12.5px; letter-spacing: .35px; color: #111; white-space: pre; }

.menubar { height: 27px; flex: none; display: flex; align-items: center; background: #c8d7d5; }
.mi { font-size: 11px; color: #3c3c3c; margin-right: 13.4px; white-space: nowrap; flex: none; }
.mi-i { margin-left: 2px; margin-right: 13px; }
.mi-f { margin-right: 20px; }
.mi-p { margin-right: 14px; }

.tb { height: 34px; flex: none; display: flex; align-items: flex-start; border-bottom: 1px solid #e4e4e4; overflow: hidden; }
.tb4 { height: 33px; align-items: center; border-bottom: 2px solid #999; padding-bottom: 1px; }
.grip {
  width: 3px; height: 26px; margin-top: 4px;
  background: repeating-linear-gradient(to bottom, #b4b4b4 0 2px, transparent 2px 4px);
  opacity: .45;
}
.g2 { margin-left: 2px; margin-right: 2px; opacity: 1; }
.sep { width: 1px; height: 25px; margin-top: 4px; background: #d4d4d4; }
.tb4 .sep { margin-top: 0; }
.bar { width: 1px; height: 33px; background: #e0e0e0; }
.lbl { width: 22px; font-size: 11px; line-height: 33px; color: #222; flex: none; }

.search {
  width: 125px; height: 20px; margin: 7px 0 0 8px;
  border: 1px solid #aaa;
  display: flex; align-items: center; justify-content: space-between;
  font-size: 11px; color: #222; flex: none; padding: 0 4px 0 1px;
}

.sel {
  height: 20px; border: 1px solid #aaa; flex: none;
  display: flex; align-items: center; justify-content: space-between;
  font-size: 11px; color: #222; padding: 0 3px 0 2px;
  background: #fff;
}
.sel i { width: 0; height: 0; border: 4px solid transparent; border-top: 4px solid #222; border-bottom: 0; margin-right: 3px; }
.s1 { width: 133px; border-left: 0; margin-right: 7px; }
.s2 { width: 140px; margin-right: 7px; }

.tog { background: #c3d6d3; outline: 1px solid #9cb8b6; outline-offset: -1px; }
.tg0 { margin-left: 5px; }

.t-a { font-family: "Liberation Sans", sans-serif; }
.t-b { font-family: "Liberation Sans", sans-serif; font-weight: bold; }
.t-s { font-family: "Liberation Serif", serif; font-weight: bold; }
.t-bi { font-family: "Liberation Sans", sans-serif; font-weight: bold; font-style: italic; }
.t-c { text-anchor: middle; }

.canvas { flex: 1; min-height: 0; background: #ccc; overflow: hidden; }
.dr { font-family: Inter, "Liberation Sans", sans-serif; font-weight: 200; fill: #111; }
.dr-d { fill: #222; }
.dr-s { fill: #222; opacity: .75; }
.wm-big {
  font-family: "Noto Sans CJK SC", sans-serif; font-weight: 700;
  fill: #62b9e4; stroke: #f4f6f8; stroke-width: 3px; paint-order: stroke;
}
.wm-url {
  font-family: "DejaVu Sans", sans-serif; font-weight: bold;
  fill: #62b9e4; stroke: #f4f6f8; stroke-width: 2.5px; paint-order: stroke;
}
```
